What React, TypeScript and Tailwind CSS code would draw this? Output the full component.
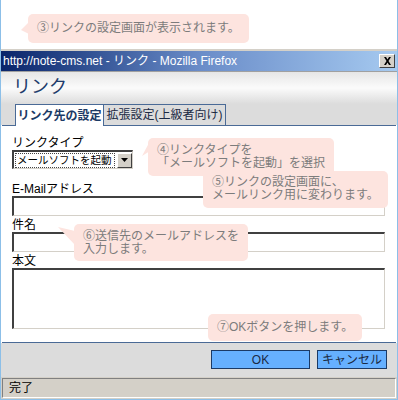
const jp = { fontFamily: '"Liberation Sans", "Noto Sans CJK JP", sans-serif' };

function Callout({
  className,
  lines,
}: {
  className: string;
  lines: string[];
}) {
  return (
    <div
      className={`absolute rounded-[5px] bg-[#fde4df] px-[9px] text-[12px] leading-[13px] text-[#7c7c7c] ${className}`}
    >
      {lines.map((l) => (
        <div key={l} className="whitespace-nowrap">
          {l}
        </div>
      ))}
    </div>
  );
}

function Field({ label, tall }: { label: string; tall?: boolean }) {
  return (
    <div>
      <div className="h-[14px] text-[12px] leading-[14px] text-black">{label}</div>
      <div
        className={`w-[373px] border-t-2 border-l-2 border-b border-r border-t-[#404040] border-l-[#404040] border-b-[#d4d0c8] border-r-[#d4d0c8] bg-white ${
          tall ? "h-[61px]" : "h-[20px]"
        }`}
      />
    </div>
  );
}

export default function App() {
  return (
    <div
      className="relative h-[400px] w-[398px] overflow-hidden border-x border-b border-[#8cbfe8] bg-white"
      style={jp}
    >
      <div className="h-[49px]" />
      <div className="h-[2px] bg-[#d4d0c8]" />

      {/* title bar */}
      <div className="flex h-[20px] items-center justify-between bg-gradient-to-r from-[#0a246a] via-[#6a8cc8] to-[#a6caf0] pl-[2px] pr-[2px]">
        <span className="text-[12px] leading-none text-white">
          http://note-cms.net - リンク - Mozilla Firefox
        </span>
        <div className="flex h-[14px] w-[16px] items-center justify-center border border-t-white border-l-white border-b-[#404040] border-r-[#404040] bg-[#d4d0c8]">
          <svg width="9" height="8" viewBox="0 0 9 8">
            <path d="M1 0h2l1.5 2.5L6 0h2L5.5 4 8 8H6L4.5 5.5 3 8H1l2.5-4z" fill="#000" />
          </svg>
        </div>
      </div>
      <div className="h-px bg-[#a0a0a0]" />

      {/* dialog header */}
      <div className="h-[32px] bg-gradient-to-b from-[#e6e6e6] via-[#fbfbfb] to-[#dcdcdc] pl-[12px] pt-[3px]">
        <div className="text-[18px] leading-[24px] text-[#1e3c6c]">リンク</div>
      </div>

      {/* tabs */}
      <div className="flex h-[21px] bg-[#dcdcdc] pl-[14px]">
        <div className="relative z-10 flex h-[22px] w-[89px] items-center justify-center whitespace-nowrap border-x border-t border-[#4a6a96] bg-white text-[12px] font-bold text-[#1b3a66]">
          リンク先の設定
        </div>
        <div className="flex h-[21px] w-[122px] items-center justify-center whitespace-nowrap border-r border-t border-[#4a6a96] bg-[#dcdcdc] text-[12px] text-[#1b2a44]">
          拡張設定(上級者向け)
        </div>
      </div>

      {/* panel */}
      <div className="mx-px flex h-[218px] flex-col border-y border-[#4a6a96] bg-white pl-[10px] pt-[10px]">
        <div className="h-[14px] text-[12px] leading-[14px] text-black">リンクタイプ</div>
        <div className="flex h-[19px] w-[121px] items-center border-t-2 border-l-2 border-b border-r border-t-[#404040] border-l-[#404040] border-b-[#d4d0c8] border-r-[#d4d0c8] bg-white">
          <div className="ml-px flex h-[15px] w-[101px] items-center overflow-hidden whitespace-nowrap border border-dotted border-[#444] pl-px text-[10.5px] leading-none text-black">
            メールソフトを起動
          </div>
          <div className="ml-[2px] flex h-[15px] w-[15px] shrink-0 items-center justify-center border border-t-white border-l-white border-b-[#404040] border-r-[#404040] bg-[#d4d0c8]">
            <svg width="7" height="4" viewBox="0 0 7 4">
              <path d="M0 0h7L3.5 4z" fill="#000" />
            </svg>
          </div>
        </div>
        <div className="mt-[13px] flex flex-col gap-[2px]">
          <Field label="E-Mailアドレス" />
          <Field label="件名" />
          <Field label="本文" tall />
        </div>
      </div>

      {/* footer buttons */}
      <div className="flex h-[34px] justify-end gap-[7px] bg-[#dcdcdc] pr-[10px] pt-[7px]">
        <button className="flex h-[19px] w-[99px] items-center justify-center border border-[#1b3a66] bg-[#66b0ff] text-[12px] text-[#1b2a44]">
          OK
        </button>
        <button className="flex h-[19px] w-[70px] items-center justify-center border border-[#1b3a66] bg-[#66b0ff] text-[12px] text-[#1b2a44]">
          キャンセル
        </button>
      </div>

      {/* status bar */}
      <div className="h-[22px] bg-[#d4d0c8] px-[1px] pt-px">
        <div className="flex h-[20px] items-center border border-t-[#808080] border-l-[#808080] border-b-white border-r-white pl-[6px] text-[12px] text-black">
          完了
        </div>
      </div>

      {/* callouts */}
      <svg className="absolute left-[20px] top-[22px]" width="8" height="14" viewBox="0 0 8 14">
        <path d="M8 0L0 8 8 12z" fill="#fde4df" />
      </svg>
      <Callout className="left-[27px] top-[14px] flex h-[29px] items-center" lines={["③リンクの設定画面が表示されます。"]} />

      <svg className="absolute left-[141px] top-[143px]" width="8" height="14" viewBox="0 0 8 14">
        <path d="M7 0L0 13 8 8z" fill="#fde4df" />
      </svg>
      <Callout className="left-[147px] top-[138px] h-[38px] pt-[6px]" lines={["④リンクタイプを", "「メールソフトを起動」を選択"]} />

      <Callout className="left-[202px] top-[171px] h-[37px] pt-[5px]" lines={["⑤リンクの設定画面に、", "メールリンク用に変わります。"]} />

      <svg className="absolute left-[57px] top-[227px]" width="18" height="20" viewBox="0 0 18 20">
        <path d="M0 0L17 4 17 18z" fill="#fde4df" />
      </svg>
      <Callout className="left-[73px] top-[224px] h-[37px] pt-[6px]" lines={["⑥送信先のメールアドレスを", "入力します。"]} />

      <Callout className="left-[207px] top-[314px] flex h-[27px] items-center" lines={["⑦OKボタンを押します。"]} />
    </div>
  );
}
